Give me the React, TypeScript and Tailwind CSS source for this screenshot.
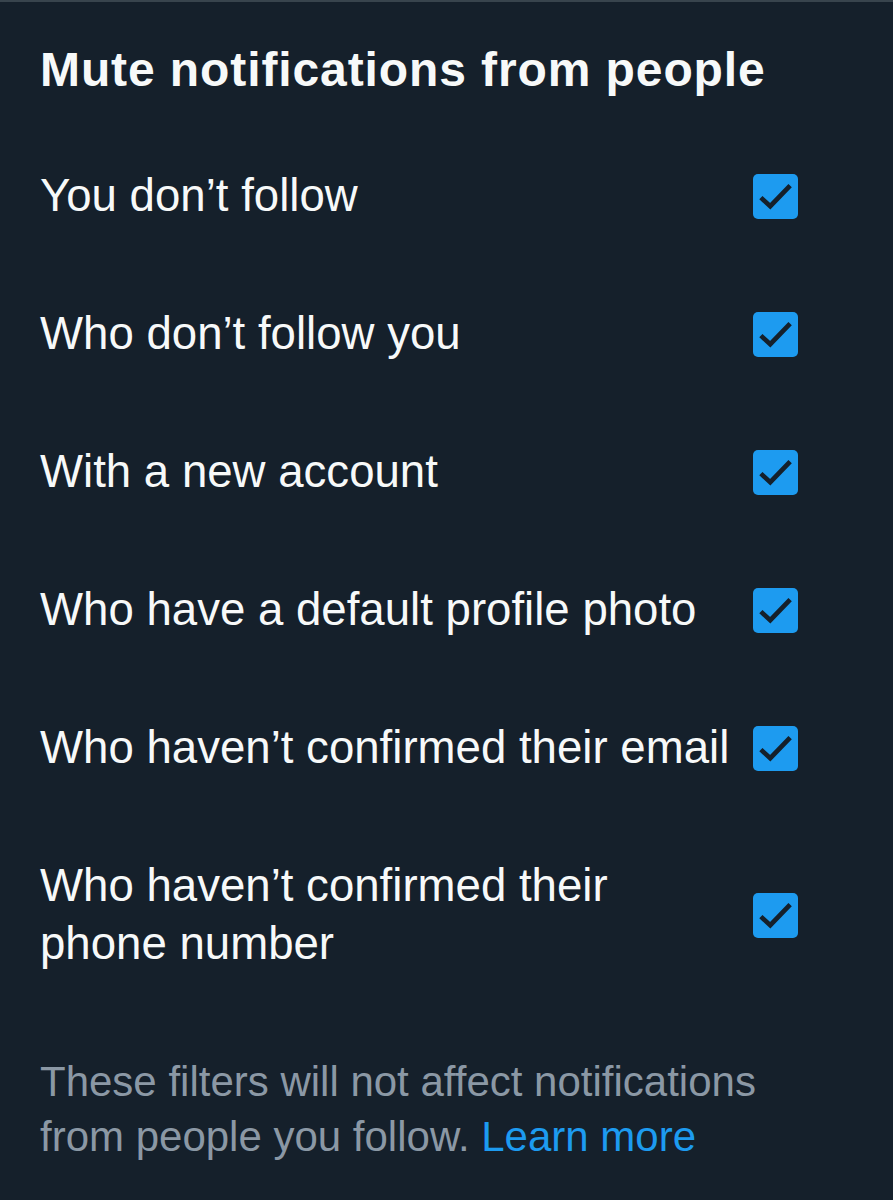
const filters = [
    "You don’t follow",
    "Who don’t follow you",
    "With a new account",
    "Who have a default profile photo",
    "Who haven’t confirmed their email",
    "Who haven’t confirmed their phone number",
]

function CheckBox() {
    return (
        <div className="flex h-[45px] w-[45px] shrink-0 items-center justify-center rounded-[5px] bg-[#1d9bf0]">
            <svg viewBox="0 0 24 24" className="h-[45px] w-[45px]">
                <polyline
                    points="4.2,12.6 9.2,17.2 19.8,6.2"
                    fill="none"
                    stroke="#15202b"
                    strokeWidth="2.5"
                />
            </svg>
        </div>
    )
}

export default function App() {
    return (
        <div className="min-h-[1200px] w-full border-t-2 border-[#38444d] bg-[#15202b] font-['Liberation_Sans',Arial,sans-serif]">
            {/* header */}
            <div className="pl-[40px] pt-[40px] pb-[29px]">
                <h1 className="text-[48px] leading-[56px] font-bold tracking-[0.9px] text-[#f7f9f9]">
                    Mute notifications from people
                </h1>
            </div>

            {/* checkbox rows */}
            <div className="flex flex-col">
                {filters.map((label) => (
                    <div
                        key={label}
                        className="flex items-center gap-[10px] py-[40px] pl-[40px] pr-[95px]"
                    >
                        <span className="min-w-0 flex-1 text-[45.6px] leading-[58px] text-[#f7f9f9]">
                            {label}
                        </span>
                        <CheckBox />
                    </div>
                ))}
            </div>

            {/* footnote */}
            <p className="pt-[41px] pl-[40px] pr-[80px] text-[42px] leading-[55px] text-[#8b98a5]">
                These filters will not affect notifications from people
                you follow.{" "}
                <a href="#" className="text-[#1d9bf0]">
                    Learn more
                </a>
            </p>
        </div>
    )
}
